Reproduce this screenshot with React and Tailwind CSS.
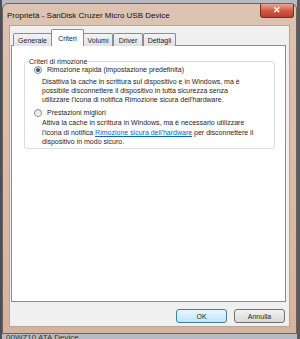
import React from 'react'

const Radio = ({ checked }) => (
  <div className="w-[8px] h-[8px] rounded-full border border-[#8a8d92] bg-gradient-to-b from-[#e4e4e4] to-[#fafafa] flex items-center justify-center shrink-0">
    {checked && <div className="w-[4px] h-[4px] rounded-full bg-gradient-to-b from-[#2a6fb0] to-[#1b4a7a]" />}
  </div>
)

const Tab = ({ label, w, active }) =>
  active ? (
    <div className={`${w} h-[17px] -mx-[1px] z-10 bg-white border border-b-0 border-[#898c95] rounded-t-[2px] flex items-start justify-center pt-[4px] text-[7px] leading-[9px]`}>
      {label}
    </div>
  ) : (
    <div className={`${w} h-[13px] bg-gradient-to-b from-[#f3f3f3] to-[#e1e1e1] border border-b-0 border-[#898c95] rounded-t-[2px] flex items-center justify-center text-[7px] leading-[9px]`}>
      {label}
    </div>
  )

export default function App() {
  return (
    <div className="w-[300px] h-[339px] relative overflow-hidden bg-[#b7bcc4] font-['Liberation_Sans',Arial,sans-serif] text-[#1e1e1e]">
      {/* desktop bits around the window */}
      <div className="absolute left-0 top-0 w-[2px] h-[339px] bg-[#4a4f58]" />
      <div className="absolute right-0 top-0 w-[3px] h-[339px] bg-[#5b5b5e]" />
      <div className="absolute left-[6px] top-[333px] text-[8px] leading-[10px] text-[#333]">00WZ10 ATA Device</div>

      <div className="pt-[3px] pl-[2px] relative">
        {/* Window */}
        <div className="w-[295px] h-[331px] border border-[#6e625a] rounded-t-[6px] bg-gradient-to-b from-[#dcc3b3] to-[#d6b39e] flex flex-col px-[6px] pb-[6px]">
          {/* Title bar */}
          <div className="h-[21px] flex items-start justify-between shrink-0">
            <span className="text-[8px] leading-[10px] pt-[7px] -ml-[2px] text-[#111]">
              Proprietà - SanDisk Cruzer Micro USB Device
            </span>
            <div className="w-[34px] h-[14px] -mr-[4px] rounded-b-[3px] border border-t-0 border-[#7a2e22] bg-gradient-to-b from-[#e9a597] via-[#d25b45] to-[#b9402b] flex items-center justify-center text-white text-[9px] font-bold leading-none">
              ✕
            </div>
          </div>

          {/* Body */}
          <div className="flex-1 bg-[#f0f0f0] border border-[#b7a497] flex flex-col">
            {/* Tabs */}
            <div className="flex items-end mt-[3px] ml-[3px] h-[17px] relative z-10">
              <Tab label="Generale" w="w-[39px]" />
              <Tab label="Criteri" w="w-[33px]" active />
              <Tab label="Volumi" w="w-[30px]" />
              <Tab label="Driver" w="w-[30px]" />
              <Tab label="Dettagli" w="w-[33px]" />
            </div>

            {/* Panel */}
            <div className="ml-[1px] mr-[3px] h-[257px] -mt-[1px] bg-white border border-[#898c95] pt-[15px] px-[12px] pr-[10px]">
              <div className="relative h-[88px] border border-[#d5dfe5] rounded-[3px] pt-[3px] pl-[9px]">
                <span className="absolute -top-[5px] left-[3px] bg-white px-[1px] text-[7px] leading-[9px]">
                  Criteri di rimozione
                </span>

                <div className="flex items-center gap-[5px] h-[9px]">
                  <Radio checked />
                  <span className="text-[7px] leading-[9px] whitespace-nowrap">Rimozione rapida (impostazione predefinita)</span>
                </div>
                <p className="mt-[3px] ml-[8px] text-[7px] leading-[9px] whitespace-nowrap">
                  Disattiva la cache in scrittura sul dispositivo e in Windows, ma è<br />
                  possibile disconnettere il dispositivo in tutta sicurezza senza<br />
                  utilizzare l'icona di notifica Rimozione sicura dell'hardware.
                </p>

                <div className="flex items-center gap-[5px] h-[9px] mt-[4px]">
                  <Radio />
                  <span className="text-[7px] leading-[9px] whitespace-nowrap">Prestazioni migliori</span>
                </div>
                <p className="mt-[1px] ml-[8px] text-[7px] leading-[9.5px] whitespace-nowrap">
                  Attiva la cache in scrittura in Windows, ma è necessario utilizzare<br />
                  l'icona di notifica <span className="text-[#0066cc] underline">Rimozione sicura dell'hardware</span> per disconnettere il<br />
                  dispositivo in modo sicuro.
                </p>
              </div>
            </div>

            {/* Buttons */}
            <div className="flex justify-end gap-[7px] mt-[7px] pr-[4px]">
              <button className="w-[51px] h-[14px] rounded-[3px] border border-[#3c7fb1] bg-gradient-to-b from-[#eaf6fd] to-[#bee6fd] text-[7px] leading-none">
                OK
              </button>
              <button className="w-[51px] h-[14px] rounded-[3px] border border-[#707070] bg-gradient-to-b from-[#f2f2f2] to-[#d9d9d9] text-[7px] leading-none">
                Annulla
              </button>
            </div>
          </div>
        </div>
      </div>
    </div>
  )
}
